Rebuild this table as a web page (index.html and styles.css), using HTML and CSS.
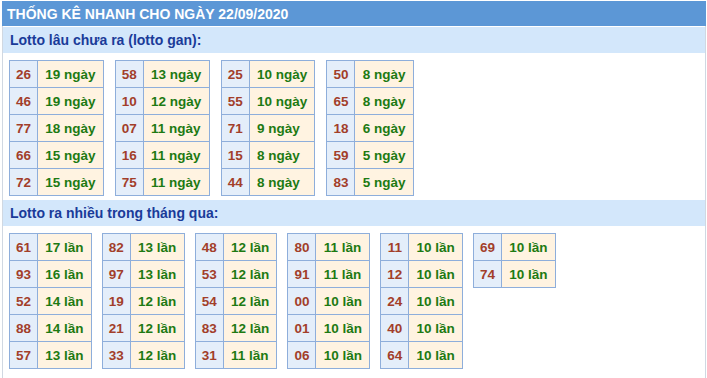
FILE: index.html
```html
<!DOCTYPE html>
<html lang="vi">
<head>
<meta charset="utf-8">
<title>Thống kê nhanh</title>
<link rel="stylesheet" href="styles.css">
</head>
<body>
<div class="box">
  <div class="title">THỐNG KÊ NHANH CHO NGÀY 22/09/2020</div>
  <div class="sub first">Lotto lâu chưa ra (lotto gan):</div>
  <div class="tables gan">
    <table><tr><td class="n">26</td><td class="v">19 ngày</td></tr><tr><td class="n">46</td><td class="v">19 ngày</td></tr><tr><td class="n">77</td><td class="v">18 ngày</td></tr><tr><td class="n">66</td><td class="v">15 ngày</td></tr><tr><td class="n">72</td><td class="v">15 ngày</td></tr></table>
    <table><tr><td class="n">58</td><td class="v">13 ngày</td></tr><tr><td class="n">10</td><td class="v">12 ngày</td></tr><tr><td class="n">07</td><td class="v">11 ngày</td></tr><tr><td class="n">16</td><td class="v">11 ngày</td></tr><tr><td class="n">75</td><td class="v">11 ngày</td></tr></table>
    <table><tr><td class="n">25</td><td class="v">10 ngày</td></tr><tr><td class="n">55</td><td class="v">10 ngày</td></tr><tr><td class="n">71</td><td class="v">9 ngày</td></tr><tr><td class="n">15</td><td class="v">8 ngày</td></tr><tr><td class="n">44</td><td class="v">8 ngày</td></tr></table>
    <table><tr><td class="n">50</td><td class="v">8 ngày</td></tr><tr><td class="n">65</td><td class="v">8 ngày</td></tr><tr><td class="n">18</td><td class="v">6 ngày</td></tr><tr><td class="n">59</td><td class="v">5 ngày</td></tr><tr><td class="n">83</td><td class="v">5 ngày</td></tr></table>
  </div>
  <div class="sub">Lotto ra nhiều trong tháng qua:</div>
  <div class="tables">
    <table><tr><td class="n">61</td><td class="v">17 lần</td></tr><tr><td class="n">93</td><td class="v">16 lần</td></tr><tr><td class="n">52</td><td class="v">14 lần</td></tr><tr><td class="n">88</td><td class="v">14 lần</td></tr><tr><td class="n">57</td><td class="v">13 lần</td></tr></table>
    <table><tr><td class="n">82</td><td class="v">13 lần</td></tr><tr><td class="n">97</td><td class="v">13 lần</td></tr><tr><td class="n">19</td><td class="v">12 lần</td></tr><tr><td class="n">21</td><td class="v">12 lần</td></tr><tr><td class="n">33</td><td class="v">12 lần</td></tr></table>
    <table><tr><td class="n">48</td><td class="v">12 lần</td></tr><tr><td class="n">53</td><td class="v">12 lần</td></tr><tr><td class="n">54</td><td class="v">12 lần</td></tr><tr><td class="n">83</td><td class="v">12 lần</td></tr><tr><td class="n">31</td><td class="v">11 lần</td></tr></table>
    <table><tr><td class="n">80</td><td class="v">11 lần</td></tr><tr><td class="n">91</td><td class="v">11 lần</td></tr><tr><td class="n">00</td><td class="v">10 lần</td></tr><tr><td class="n">01</td><td class="v">10 lần</td></tr><tr><td class="n">06</td><td class="v">10 lần</td></tr></table>
    <table><tr><td class="n">11</td><td class="v">10 lần</td></tr><tr><td class="n">12</td><td class="v">10 lần</td></tr><tr><td class="n">24</td><td class="v">10 lần</td></tr><tr><td class="n">40</td><td class="v">10 lần</td></tr><tr><td class="n">64</td><td class="v">10 lần</td></tr></table>
    <table><tr><td class="n">69</td><td class="v">10 lần</td></tr><tr><td class="n">74</td><td class="v">10 lần</td></tr></table>
  </div>
</div>
</body>
</html>
```
FILE: styles.css
```css
html, body {
  margin: 0;
  padding: 0;
  background: #ffffff;
}
body {
  font-family: "Liberation Sans", Arial, sans-serif;
}
.box {
  margin: 1px 1px 0 2px;
  border-left: 1px solid #d0d8e2;
  border-right: 1px solid #d0d8e2;
  padding-bottom: 6px;
}
.title {
  background: #5c97d6;
  color: #ffffff;
  font-weight: bold;
  font-size: 14px;
  height: 25px;
  line-height: 26px;
  padding-left: 5px;
  margin-left: -1px;
  margin-right: -1px;
}
.sub {
  background: #d3e7fb;
  color: #1a3b99;
  font-weight: bold;
  font-size: 14px;
  height: 26px;
  line-height: 27px;
  padding-left: 7px;
}
.sub.first {
  margin-top: 1px;
}
.tables {
  display: flex;
  align-items: flex-start;
  gap: 10px;
  padding: 7px 6px 4px;
}
.tables.gan {
  gap: 11px;
}
table {
  border-collapse: collapse;
  border: 1px solid #8eaedb;
}
td {
  border: 1px solid #8eaedb;
  height: 26px;
  padding: 0 6px;
  font-size: 13.5px;
  font-weight: bold;
  white-space: nowrap;
}
td.n {
  background: #e4eefa;
  color: #a23e2a;
  text-align: center;
}
td.v {
  background: #fff3e1;
  color: #1d7a13;
  padding: 0 7.25px;
}
```
